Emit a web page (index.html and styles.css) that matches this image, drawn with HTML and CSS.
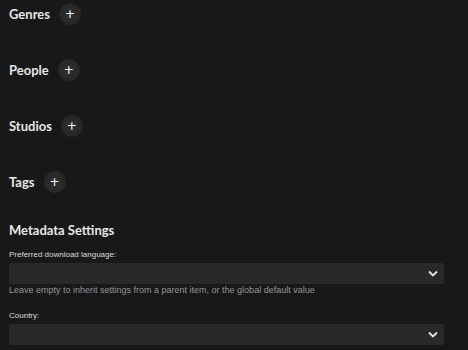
FILE: index.html
```html
<!DOCTYPE html>
<html lang="en">
<head>
    <meta charset="UTF-8">
    <title>Edit Metadata</title>
    <link rel="stylesheet" href="styles.css">
</head>
<body>
<div class="editor">
    <!-- list sections -->
    <div class="list-row">
        <h3>Genres</h3>
        <button class="add-btn" title="Add">+</button>
    </div>
    <div class="list-row">
        <h3>People</h3>
        <button class="add-btn" title="Add">+</button>
    </div>
    <div class="list-row">
        <h3>Studios</h3>
        <button class="add-btn" title="Add">+</button>
    </div>
    <div class="list-row">
        <h3>Tags</h3>
        <button class="add-btn" title="Add">+</button>
    </div>

    <!-- metadata settings -->
    <h2 class="section-title">Metadata Settings</h2>
    <div class="field">
        <label class="field-label">Preferred download language:</label>
        <div class="select-box">
            <svg class="chevron" width="10" height="7" viewBox="0 0 10 7"><path d="M1 1.5 L5 5.5 L9 1.5" fill="none" stroke="#e6e6e6" stroke-width="1.8"/></svg>
        </div>
        <div class="field-help">Leave empty to inherit settings from a parent item, or the global default value</div>
    </div>
    <div class="field">
        <label class="field-label">Country:</label>
        <div class="select-box">
            <svg class="chevron" width="10" height="7" viewBox="0 0 10 7"><path d="M1 1.5 L5 5.5 L9 1.5" fill="none" stroke="#e6e6e6" stroke-width="1.8"/></svg>
        </div>
    </div>
</div>
</body>
</html>
```

FILE: styles.css
```css
body {
    margin: 0;
    background-color: #181818;
    color: #e6e6e6;
    font-family: Lato, "Noto Sans", sans-serif;
    overflow: hidden;
}
.editor {
    padding: 3px 24px 0 9px;
}
.list-row {
    display: flex;
    align-items: center;
    height: 22px;
    margin-bottom: 34px;
}
.list-row h3 {
    margin: 0 9px 0 0;
    font-size: 13px;
    font-weight: 700;
}
.add-btn {
    width: 22px;
    height: 22px;
    border-radius: 50%;
    border: none;
    padding: 0;
    background: radial-gradient(circle, #303030 0%, #282828 60%, #1e1e1e 100%);
    color: #fff;
    font-family: "DejaVu Sans", sans-serif;
    font-size: 12px;
    line-height: 22px;
    cursor: pointer;
}
.section-title {
    margin: -7px 0 9px 0;
    font-size: 13px;
    font-weight: 700;
    line-height: 20px;
}
.field {
    margin-bottom: 15px;
}
.field-label {
    display: block;
    font-family: "Liberation Sans", Arial, sans-serif;
    font-size: 8px;
    line-height: 12px;
    color: #dcdcdc;
    margin-bottom: 2px;
}
.select-box {
    height: 21px;
    background-color: #292929;
    border-radius: 2px;
    display: flex;
    align-items: center;
    justify-content: flex-end;
    padding-right: 6px;
}
.field-help {
    font-family: "Liberation Sans", Arial, sans-serif;
    font-size: 9px;
    color: #959595;
    margin-top: 1px;
}
```
